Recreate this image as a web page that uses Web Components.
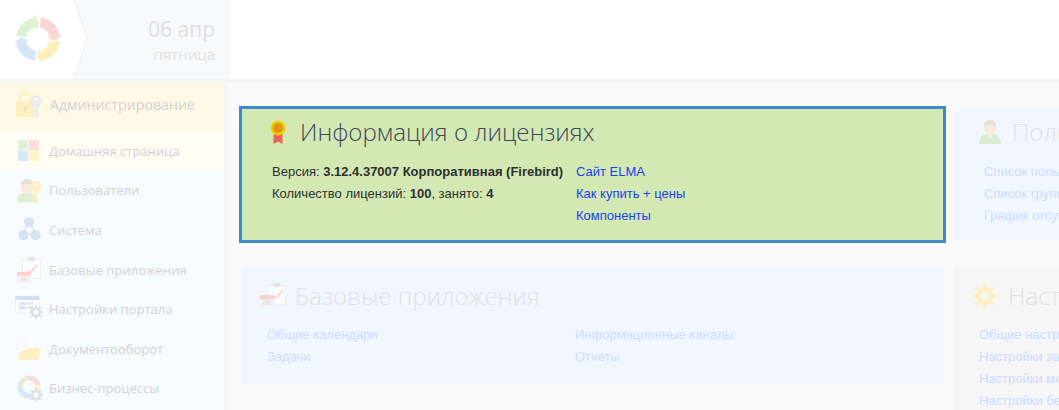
<!DOCTYPE html>
<html lang="ru">
<head>
<meta charset="utf-8">
<title>ELMA</title>
<style>
  html, body { margin: 0; height: 100%; overflow: hidden; background: #fafafa; }
</style>
</head>
<body>
<elma-app></elma-app>

<script>
// teeth are computed so every gear in the page has the same shape
const gear = (cx, cy, r, color, hole) => {
  const pts = []
  const teeth = 8
  for (let i = 0; i < teeth; i++) {
    const step = 360 / teeth
    const a = i * step
    pts.push(polar(cx, cy, r * 0.74, a - step * 0.3), polar(cx, cy, r, a - step * 0.16),
      polar(cx, cy, r, a + step * 0.16), polar(cx, cy, r * 0.74, a + step * 0.3))
  }
  return `<polygon points="${pts.join(' ')}" fill="${color}"/><circle cx="${cx}" cy="${cy}" r="${r * 0.36}" fill="${hole}"/>`
}

const polar = (cx, cy, r, deg) => {
  const a = (deg - 90) * Math.PI / 180
  return `${(cx + r * Math.cos(a)).toFixed(1)} ${(cy + r * Math.sin(a)).toFixed(1)}`
}
const arc = (cx, cy, r, from, to, color, width) =>
  `<path d="M${polar(cx, cy, r, from)} A${r} ${r} 0 0 1 ${polar(cx, cy, r, to)}" fill="none" stroke="${color}" stroke-width="${width}"/>`

const ICONS = {
  lock: [30, 30, `
    <path d="M5 11V8a5 5 0 0 1 10 0v3" fill="none" stroke="#fdefbf" stroke-width="2.4"/>
    <rect x="1" y="11" width="18" height="16" rx="1" fill="#fdf0c0"/>
    <circle cx="10" cy="18" r="2" fill="#efe5c4"/><rect x="9" y="18" width="2" height="4" fill="#efe5c4"/>
    <circle cx="21" cy="11" r="6" fill="#ecedef"/><rect x="19.5" y="14" width="4" height="14" fill="#ecedef"/>
    <circle cx="21" cy="9" r="1.5" fill="#fff8e6"/>`],
  home: [28, 28, `
    <rect x="3" y="3" width="10" height="10" fill="#e1f0d6"/><rect x="14" y="3" width="10" height="10" fill="#fbdcdd"/>
    <rect x="3" y="14" width="10" height="10" fill="#d6e8f8"/><rect x="14" y="14" width="10" height="10" fill="#fdf3c6"/>`],
  users: [28, 28, `
    <path d="M2 26c0-6 3-9 8-9h5c3 0 5 3 5 9z" fill="#e0eed6"/>
    <ellipse cx="12" cy="11" rx="6" ry="7" fill="#f6ecdf"/>
    <path d="M6 10c-1-5 3-7 6-7s7 2 6 7c-3-2-8-3-12 0z" fill="#e9e1d4"/>
    <circle cx="21" cy="10" r="5.5" fill="#fdf1c4"/><rect x="19" y="13" width="4" height="14" fill="#fdf1c4"/>
    <circle cx="21" cy="8.5" r="1.3" fill="#f8fbff"/>`],
  system: [28, 28, `
    <path d="M14 6L8 18H21z" fill="none" stroke="#dbe5f3" stroke-width="1.6"/>
    <circle cx="14" cy="6" r="5" fill="#d7e2f3"/><circle cx="8.5" cy="19" r="5.2" fill="#d7e2f3"/><circle cx="20.5" cy="19" r="5.2" fill="#d7e2f3"/>`],
  base: [28, 28, `
    <rect x="7.5" y="3.5" width="18" height="19" fill="#fff" stroke="#eeeff1"/>
    <rect x="13" y="1" width="7" height="4" rx="1" fill="#e5e7e9"/>
    <path d="M12 15l3 2 7-8" fill="none" stroke="#fad6d6" stroke-width="2"/>
    <rect x="2" y="16" width="14" height="11" fill="#f3f3f5"/><rect x="2" y="16" width="14" height="4" fill="#fad3d1"/>
    <rect x="6" y="21.500" width="6" height="3" fill="#f6dede"/>`],
  portal: [28, 28, `
    <rect x="0.5" y="1" width="24" height="17" fill="#fff" stroke="#eef1f6"/>
    <rect x="0" y="1" width="24" height="4" fill="#cfe0f2"/>
    <rect x="4" y="7" width="7" height="3" fill="#d8e4f3"/><rect x="12" y="7" width="7" height="3" fill="#e2eaf5"/>
    <rect x="4" y="11" width="7" height="3.5" fill="#d8e4f3"/><rect x="12" y="11" width="7" height="3.5" fill="#e2eaf5"/>
    ${gear(21, 17, 7, '#dfe0e4', '#f8fbff')}`],
  folder: [28, 28, `
    <path d="M3 3h12l5 5v10H3z" fill="#fff" stroke="#f1f2f4"/>
    <path d="M6 8h6M6 11h9" stroke="#ebecee"/>
    <path d="M2.5 25l3-10h6l2-2h13l-4 12z" fill="#fdf1c4"/>`],
  process: [28, 28, `
    ${arc(14, 13, 9, 275, 350, '#e1f0d6', 5)}${arc(14, 13, 9, 350, 80, '#fbdada', 5)}
    ${arc(14, 13, 9, 80, 170, '#fdf1c4', 5)}${arc(14, 13, 9, 170, 275, '#d6e7f7', 5)}
    ${gear(21, 21, 7, '#dfe0e4', '#f8fbff')}`],
  medal: [16, 24, `
    <path d="M3.500 13h9v11l-4.500-2.500-4.500 2.500z" fill="#e8655a"/>
    <circle cx="8" cy="8" r="7.500" fill="#f6c90e"/><circle cx="8" cy="8" r="5" fill="#d99a00"/>`],
  user: [24, 26, `
    <path d="M1 25c0-7 4-10 8-10h6c4 0 8 3 8 10z" fill="#dcecd0"/>
    <path d="M9 15l3 4 3-4z" fill="#eef6e6"/>
    <ellipse cx="12" cy="9" rx="6" ry="7.500" fill="#f6ecdf"/>
    <path d="M6 8c-1-5 3-7 6-7s7 2 6 7c-3-2-8-3-12 0z" fill="#eae2d5"/>`],
  clipboard: [26, 26, `
    <rect x="7.500" y="2.500" width="18" height="19.500" fill="#fbfcfe" stroke="#e9ebee"/>
    <rect x="13" y="0" width="7" height="4" rx="1" fill="#e3e5e8"/>
    <path d="M13 13l3 2 7-8" fill="none" stroke="#fad6d6" stroke-width="2"/>
    <rect x="0" y="12" width="14" height="13" fill="#f3f3f5"/><rect x="0" y="12" width="14" height="4.500" fill="#fad3d1"/>
    <rect x="3" y="18" width="8" height="4" fill="#e9e9eb"/>`],
  cog: [24, 24, `${gear(12, 12, 12, '#fdf1c4', '#f6f6f6')}`]
}

class ElmaIcon extends HTMLElement {
  connectedCallback () {
    const [w, h, body] = ICONS[this.getAttribute('name')]
    this.attachShadow({ mode: 'open' }).innerHTML = `
      <style>
        :host { display: block; line-height: 0; flex: none; }
      </style>
      <svg width="${w}" height="${h}" viewBox="0 0 ${w} ${h}">${body}</svg>`
  }
}

class ElmaLogo extends HTMLElement {
  connectedCallback () {
    const cx = 38
    const cy = 39
    const part = (from, to, color) => {
      const tip = polar(cx, cy, 17, to + 15)
      return arc(cx, cy, 17, from, to, color, 10) +
        `<polygon points="${polar(cx, cy, 25, to)} ${tip} ${polar(cx, cy, 9, to)}" fill="${color}"/>`
    }
    this.attachShadow({ mode: 'open' }).innerHTML = `
      <style>
        :host { display: block; width: 88px; height: 79px; line-height: 0; flex: none; }
      </style>
      <svg width="88" height="79" viewBox="0 0 88 79">
        <polygon points="0,0 74,0 87,38 74,79 0,79" fill="#fff"/>
        <polyline points="74,0 87,38 74,79" fill="none" stroke="#f1f2f4" stroke-width="1.500"/>
        ${part(278, 350, '#e0f0d3')}
        ${part(8, 80, '#fad6d6')}
        ${part(98, 170, '#fdefb8')}
        ${part(188, 260, '#d3e5f7')}
      </svg>`
  }
}

class ElmaHeader extends HTMLElement {
  connectedCallback () {
    this.attachShadow({ mode: 'open' }).innerHTML = `
      <style>
        :host { display: flex; height: 79px; background: #fff; border-bottom: 3px solid #f3f4f6; }
        .left { display: flex; width: 228px; background: #f8f9fb; border-right: 1px solid #f0f1f3; }
        .date {
          flex: 1; padding: 15px 13px 0 0; text-align: right;
          font-family: "Open Sans", sans-serif; color: #dfdfdf;
        }
        .day { font-size: 21px; line-height: 28px; }
        .week { font-size: 15px; line-height: 20px; margin-top: 1px; color: #e2e2e2; }
      </style>
      <div class="left">
        <elma-logo></elma-logo>
        <div class="date">
          <div class="day">06 апр</div>
          <div class="week">пятница</div>
        </div>
      </div>`
  }
}

class SideItem extends HTMLElement {
  connectedCallback () {
    this.attachShadow({ mode: 'open' }).innerHTML = `
      <style>
        :host {
          display: flex; align-items: center; gap: 6px; height: 39.6px; box-sizing: border-box;
          padding: 1px 0 0 15px;
          font: 13px "Open Sans", sans-serif; color: #d2d2d5;
        }
        :host([active]) { background: #fffcf3; }
      </style>
      <elma-icon name="${this.getAttribute('icon')}"></elma-icon>
      <slot></slot>`
  }
}

class SideBar extends HTMLElement {
  connectedCallback () {
    this.attachShadow({ mode: 'open' }).innerHTML = `
      <style>
        :host {
          display: block; width: 224px; flex: none; background: #f8fbff;
          border-right: 4px solid #f5f6f8;
        }
        .group {
          display: flex; align-items: center; gap: 5px; height: 48.500px; box-sizing: border-box;
          padding: 0 0 3px 15px;
          background: #fff9e6; font: 14.200px "Open Sans", sans-serif; color: #d3d1d4;
        }
      </style>
      <div class="group"><elma-icon name="lock"></elma-icon>Администрирование</div>
      <slot></slot>`
  }
}

class InfoCard extends HTMLElement {
  connectedCallback () {
    const attr = (name, value) => this.getAttribute(name) || value
    this.attachShadow({ mode: 'open' }).innerHTML = `
      <style>
        :host {
          display: block; box-sizing: border-box;
          padding: ${attr('top', '10')}px 0 0 ${attr('pad', '25')}px;
          background: var(--card-bg, #f0f7ff);
          font: 13px "Liberation Sans", sans-serif; color: #cfdaff;
        }
        :host([highlight]) {
          --card-bg: #d3e9b4; color: #2f2f2f;
          outline: 3px solid #3d8bcb; margin: 0 1px 1px 0; position: relative;
        }
        .head { display: flex; align-items: center; gap: ${attr('gap', '11')}px; height: 28px; }
        h2 {
          margin: 0; font: 300 24.150px/28px "Open Sans", sans-serif;
          color: #dfe1e3; white-space: nowrap;
        }
        :host([highlight]) h2 { color: #3c4856; }
        .body { margin: ${attr('drop', '14')}px 0 0 ${attr('indent', '25') - attr('pad', '25')}px; }
      </style>
      <div class="head">
        <elma-icon name="${this.getAttribute('icon')}"></elma-icon>
        <h2>${this.getAttribute('heading')}</h2>
      </div>
      <div class="body"><slot></slot></div>`
  }
}

class LinkList extends HTMLElement {
  connectedCallback () {
    this.attachShadow({ mode: 'open' }).innerHTML = `
      <style>
        :host {
          display: grid; grid-template-columns: var(--cols, 1fr); grid-auto-rows: 22px;
          align-items: center; white-space: nowrap;
        }
      </style>
      <slot></slot>`
  }
}

class ElmaApp extends HTMLElement {
  connectedCallback () {
    this.attachShadow({ mode: 'open' }).innerHTML = `
      <style>
        :host { display: flex; flex-direction: column; height: 410px; overflow: hidden; }
        .page { display: flex; flex: 1; min-height: 0; }
        .cards {
          display: grid; grid-template-columns: 702px 400px; grid-template-rows: 132px 118px 60px;
          column-gap: 10px; row-gap: 26px; padding: 27px 0 0 14px;
        }
        .tall { grid-row: span 2; --card-bg: #f6f6f6; }
        a { color: inherit; text-decoration: none; }
        .licence { color: #2f2f2f; }
        .licence a { color: #1a3ff0; }
        .licence b { font-weight: 700; }
      </style>
      <elma-header></elma-header>
      <div class="page">
        <side-bar>
          <side-item icon="home" active>Домашняя страница</side-item>
          <side-item icon="users">Пользователи</side-item>
          <side-item icon="system">Система</side-item>
          <side-item icon="base">Базовые приложения</side-item>
          <side-item icon="portal">Настройки портала</side-item>
          <side-item icon="folder">Документооборот</side-item>
          <side-item icon="process">Бизнес-процессы</side-item>
        </side-bar>
        <div class="cards">
          <info-card highlight top="9" pad="28" gap="14" indent="30" icon="medal" heading="Информация о лицензиях">
            <link-list style="--cols: 304px 1fr" class="licence">
              <span>Версия: <b>3.12.4.37007 Корпоративная (Firebird)</b></span><a href="#">Сайт ELMA</a>
              <span>Количество лицензий: <b>100</b>, занято: <b>4</b></span><a href="#">Как купить + цены</a>
              <span></span><a href="#">Компоненты</a>
            </link-list>
          </info-card>
          <info-card top="9" pad="24" gap="10" indent="30" icon="user" heading="Пользователи">
            <link-list>
              <span>Список пользователей</span>
              <span>Список групп</span>
              <span>График отсутствий</span>
            </link-list>
          </info-card>
          <info-card top="15" drop="13" pad="18" gap="9" indent="25" icon="clipboard" heading="Базовые приложения">
            <link-list style="--cols: 308px 1fr">
              <span>Общие календари</span><span>Информационные каналы</span>
              <span>Задачи</span><span>Отчеты</span>
            </link-list>
          </info-card>
          <info-card class="tall" top="15" drop="13" pad="19" gap="11" indent="25" icon="cog" heading="Настройки">
            <link-list>
              <span>Общие настройки</span>
              <span>Настройки задач</span>
              <span>Настройки модулей</span>
              <span>Настройки безопасности</span>
            </link-list>
          </info-card>
        </div>
      </div>`
  }
}

customElements.define('elma-icon', ElmaIcon)
customElements.define('elma-logo', ElmaLogo)
customElements.define('elma-header', ElmaHeader)
customElements.define('side-item', SideItem)
customElements.define('side-bar', SideBar)
customElements.define('info-card', InfoCard)
customElements.define('link-list', LinkList)
customElements.define('elma-app', ElmaApp)
</script>
</body>
</html>
